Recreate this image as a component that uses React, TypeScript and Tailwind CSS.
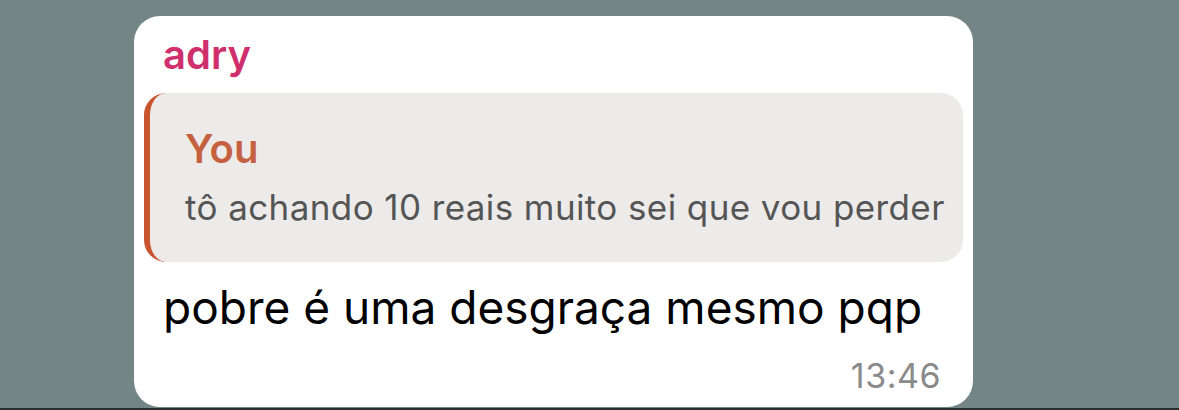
export default function App() {
  return (
    <div className="w-[1179px] h-[410px] overflow-hidden bg-[#748586] flex flex-col" style={{ fontFamily: "Inter, 'Noto Sans', sans-serif" }}>
      <div className="flex-1 pt-[16px] pl-[134px]">
        <div className="w-[839px] h-[391px] bg-white rounded-[26px] px-[10px] pt-[15px] flex flex-col">
          <div className="pl-[19px] text-[40px] leading-[48px] font-semibold text-[#cf2f6c]">adry</div>
          <div className="mt-[14px] h-[169px] shrink-0 rounded-[22px] bg-[#edebea] border-l-[6px] border-[#c9552e] pl-[35px] pt-[32px]">
            <div className="text-[40px] leading-[48px] font-semibold text-[#c6613f]">You</div>
            <div className="mt-[13px] text-[35px] leading-[42px] text-[#555555] tracking-[0.4px] whitespace-nowrap">tô achando 10 reais muito sei que vou perder</div>
          </div>
          <div className="mt-[17px] pl-[19px] text-[46px] leading-[56px] text-black whitespace-nowrap">pobre é uma desgraça mesmo pqp</div>
          <div className="mt-[21px] pr-[22px] text-right text-[34px] leading-[40px] text-[#8a8a8a] tracking-[0.5px]">13:46</div>
        </div>
      </div>
      <div className="h-[2px] bg-[#2a2d2d]" />
    </div>
  );
}
